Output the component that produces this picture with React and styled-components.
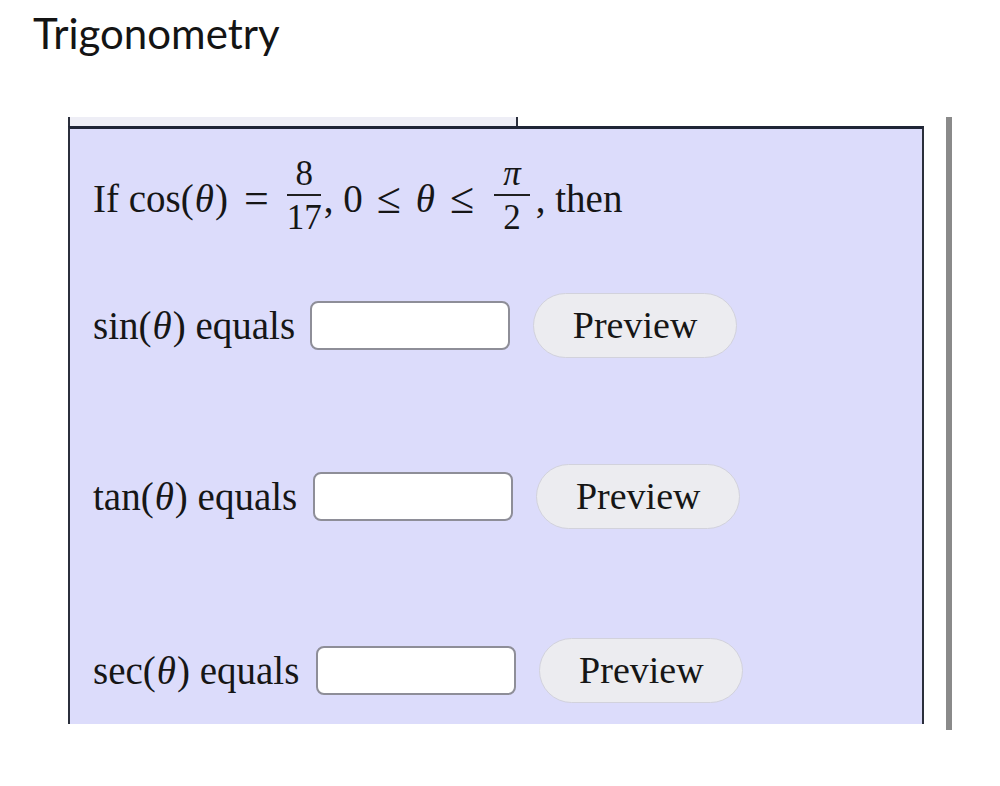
import React from 'react';
import styled, { createGlobalStyle } from 'styled-components';

const GlobalStyle = createGlobalStyle`
    body {
        margin: 0;
        background: #fff;
    }
`;

const Page = styled.div`
    width: 1000px;
    height: 786px;
    overflow: hidden;
    box-sizing: border-box;
    padding-top: 10px;
`;

const Title = styled.h1`
    margin: 0 0 0 33px;
    font-family: Lato, "Noto Sans", sans-serif;
    font-weight: 400;
    font-size: 42px;
    line-height: 46px;
    color: #141414;
`;

const Stage = styled.div`
    display: flex;
    margin-top: 61px;
    padding-left: 68px;
`;

const Column = styled.div`
    display: flex;
    flex-direction: column;
    width: 856px;
`;

const Tab = styled.div`
    width: 450px;
    height: 9px;
    background: #eeeef6;
    border-left: 2px solid #2b2f3c;
    border-right: 2px solid #2b2f3c;
    box-sizing: border-box;
`;

const Problem = styled.div`
    height: 598px;
    box-sizing: border-box;
    background: #dcdcfb;
    border-top: 3px solid #1f2536;
    border-left: 2px solid #2b2f3c;
    border-right: 2px solid #2b2f3c;
    padding: 31px 0 0 23px;
    display: flex;
    flex-direction: column;
    font-family: "Liberation Serif", "Times New Roman", serif;
    font-size: 39px;
    color: #161616;
`;

const ScrollBar = styled.div`
    width: 6px;
    height: 613px;
    margin-left: 22px;
    background: #8a8a8a;
`;

const Question = styled.div`
    display: flex;
    align-items: center;
    height: 76px;
    white-space: pre;
`;

const Var = styled.i`
    font-style: italic;
    padding: 0 1px;
`;

const Rel = styled.span`
    padding: 0 ${(p) => p.space || 14}px;
    font-size: ${(p) => (p.big ? 44 : 39)}px;
`;

const Frac = styled.span`
    display: inline-flex;
    flex-direction: column;
    align-items: center;
    margin: 0 ${(p) => p.side || 2}px 4px;
    font-size: 35px;
    line-height: 32px;
`;

const Num = styled.span`
    padding: 0 8px 4px;
    border-bottom: 2px solid #202020;
`;

const Den = styled.span`
    padding-top: 6px;
`;

const Comma = styled.span`
    align-self: center;
`;

const AnswerRow = styled.div`
    display: flex;
    align-items: center;
    height: 66px;
    margin-top: ${(p) => p.top}px;
`;

const Label = styled.span`
    white-space: pre;
`;

const Answer = styled.input`
    width: 200px;
    height: 49px;
    box-sizing: border-box;
    margin-left: ${(p) => p.gap}px;
    border: 2px solid #8e8e98;
    border-radius: 8px;
    background: #fff;
    outline: none;
`;

const PreviewButton = styled.button`
    width: 204px;
    height: 65px;
    margin-left: 23px;
    border-radius: 33px;
    border: 1.5px solid #d2d2dc;
    background: #ececf0;
    font-family: "Liberation Serif", "Times New Roman", serif;
    font-size: 38px;
    color: #161616;
    cursor: pointer;
`;

const rows = [
    { fn: 'sin', top: 56, gap: 15 },
    { fn: 'tan', top: 105, gap: 16 },
    { fn: 'sec', top: 108, gap: 17 },
];

function App() {
    return (
        <Page>
            <GlobalStyle />
            <Title>Trigonometry</Title>
            <Stage>
                <Column>
                    <Tab />
                    <Problem>
                        <Question>
                            <span>If cos(</span>
                            <Var>θ</Var>
                            <span>)</span>
                            <Rel space={16} big>=</Rel>
                            <Frac>
                                <Num>8</Num>
                                <Den>17</Den>
                            </Frac>
                            <Comma>,</Comma>
                            <span> 0</span>
                            <Rel big>≤</Rel>
                            <Var>θ</Var>
                            <Rel big>≤</Rel>
                            <Frac side={6}>
                                <Num><Var>π</Var></Num>
                                <Den>2</Den>
                            </Frac>
                            <Comma>,</Comma>
                            <span> then</span>
                        </Question>
                        {rows.map((r) => (
                            <AnswerRow key={r.fn} top={r.top}>
                                <Label>
                                    {r.fn}(<Var>θ</Var>) equals
                                </Label>
                                <Answer gap={r.gap} />
                                <PreviewButton>Preview</PreviewButton>
                            </AnswerRow>
                        ))}
                    </Problem>
                </Column>
                <ScrollBar />
            </Stage>
        </Page>
    );
}

export default App;
